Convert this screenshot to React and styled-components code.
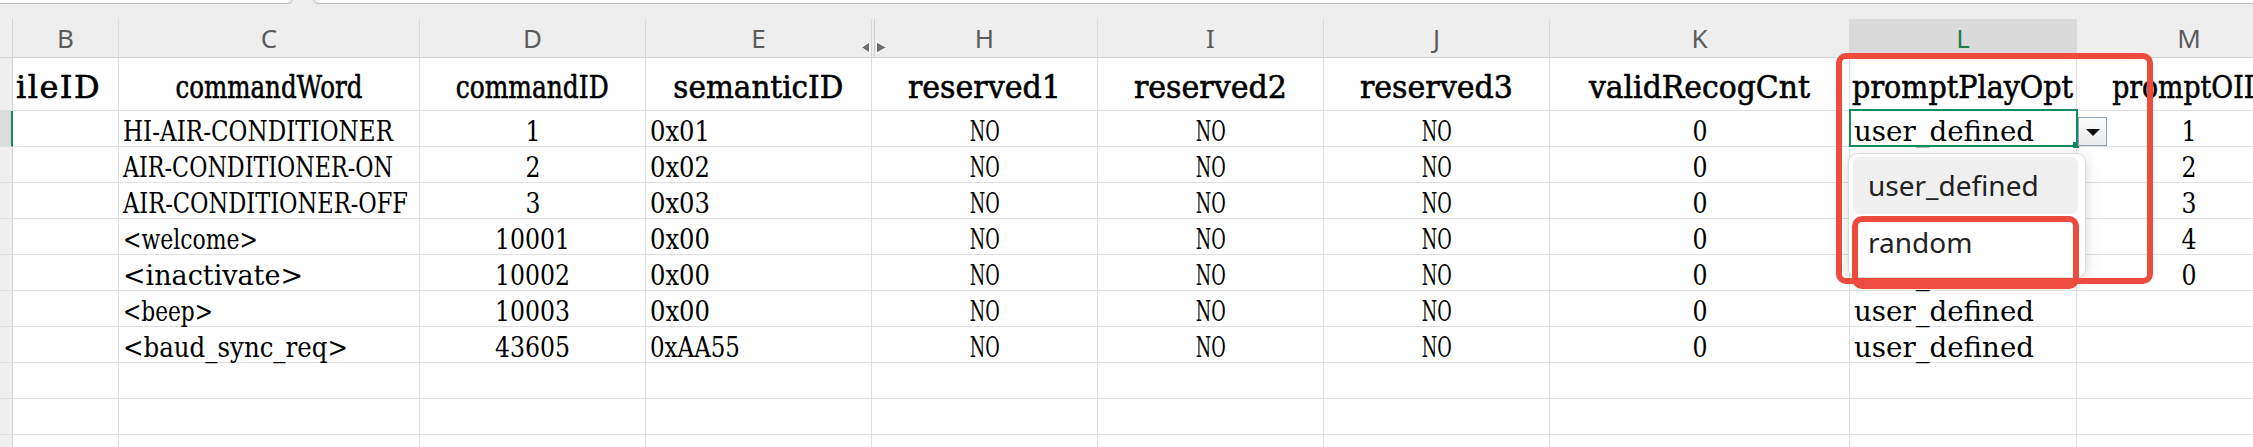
import React, { useLayoutEffect, useRef, useState } from 'react';
import styled, { createGlobalStyle } from 'styled-components';

const GlobalStyle = createGlobalStyle`
  html, body {
    margin: 0;
    padding: 0;
    background: #ffffff;
    overflow: hidden;
  }
`;

const GREEN = '#168a5c';
const RED = '#ee4b3f';
const GRID = '#dfdfdf';

// the sheet font has half-width latin glyphs, so every string takes a fixed pitch per char
const DATA_PITCH = 15;
const TITLE_PITCH = 17;

const columns = [
  { letter: 'B', width: 106, title: 'ileID', align: 'left' },
  { letter: 'C', width: 301, title: 'commandWord', align: 'left' },
  { letter: 'D', width: 226, title: 'commandID', align: 'center' },
  { letter: 'E', width: 226, title: 'semanticID', align: 'left' },
  { letter: 'H', width: 226, title: 'reserved1', align: 'center', hiddenBefore: true },
  { letter: 'I', width: 226, title: 'reserved2', align: 'center' },
  { letter: 'J', width: 226, title: 'reserved3', align: 'center' },
  { letter: 'K', width: 300, title: 'validRecogCnt', align: 'center' },
  { letter: 'L', width: 227, title: 'promptPlayOpt', align: 'left', active: true },
  { letter: 'M', width: 225, title: 'promptOID', align: 'center' },
];

const rows = [
  ['', 'HI-AIR-CONDITIONER', '1', '0x01', 'NO', 'NO', 'NO', '0', 'user_defined', '1'],
  ['', 'AIR-CONDITIONER-ON', '2', '0x02', 'NO', 'NO', 'NO', '0', 'user_defined', '2'],
  ['', 'AIR-CONDITIONER-OFF', '3', '0x03', 'NO', 'NO', 'NO', '0', 'user_defined', '3'],
  ['', '<welcome>', '10001', '0x00', 'NO', 'NO', 'NO', '0', 'user_defined', '4'],
  ['', '<inactivate>', '10002', '0x00', 'NO', 'NO', 'NO', '0', 'user_defined', '0'],
  ['', '<beep>', '10003', '0x00', 'NO', 'NO', 'NO', '0', 'user_defined', ''],
  ['', '<baud_sync_req>', '43605', '0xAA55', 'NO', 'NO', 'NO', '0', 'user_defined', ''],
];

// cells that sit fully under the open dropdown list (row index, column index)
const coveredByList = (i, j) => j === 8 && i >= 1 && i <= 3;

const EMPTY_ROWS = 3;

// squeezes or spreads a serif string so it spans chars * pitch, like the half-width sheet font
const FitText = ({ children, pitch, align }) => {
  const ref = useRef(null);
  const [fit, setFit] = useState(null);

  useLayoutEffect(() => {
    const el = ref.current;
    if (!el) return;
    const natural = el.getBoundingClientRect().width;
    const n = String(children).length;
    const target = n * pitch;
    if (natural < target) {
      setFit({ letterSpacing: `${(target - natural) / n}px` });
    } else {
      setFit({ transform: `scaleX(${target / natural})` });
    }
  }, [children, pitch]);

  return (
    <Glyphs ref={ref} $align={align} style={fit || undefined}>
      {children}
    </Glyphs>
  );
};

const App = () => {
  return (
    <>
      <GlobalStyle />
      <Sheet>
        <TopStrip>
          <EdgeRule $w={288} />
          <Notch width="30" height="19" viewBox="0 0 30 19">
            <path d="M0 3.5 Q3.5 3.5 4.5 0" fill="none" stroke="#bfbfbf" strokeWidth="1" />
            <path d="M25.5 0 Q26.5 3.5 30 3.5" fill="none" stroke="#bfbfbf" strokeWidth="1" />
          </Notch>
          <EdgeRule $grow />
        </TopStrip>

        <Grid $cols={columns.map((c) => c.width)}>
          <RowHead $corner />
          {columns.map((c) => (
            <ColHead key={c.letter} $active={c.active} $hiddenBefore={c.hiddenBefore}>
              {c.letter}
            </ColHead>
          ))}

          <RowHead />
          {columns.map((c, j) => {
            const align = j === 0 ? 'left' : 'center';
            return (
              <TitleCell key={c.letter} $align={align} $pad={3}>
                <FitText pitch={TITLE_PITCH} align={align}>
                  {c.title}
                </FitText>
              </TitleCell>
            );
          })}

          {rows.map((row, i) => (
            <React.Fragment key={i}>
              <RowHead $selected={i === 0} />
              {row.map((value, j) => (
                <DataCell key={j} $align={columns[j].align} $pad={4}>
                  {value && !coveredByList(i, j) && (
                    <FitText pitch={DATA_PITCH} align={columns[j].align}>
                      {value}
                    </FitText>
                  )}
                </DataCell>
              ))}
            </React.Fragment>
          ))}

          {Array.from({ length: EMPTY_ROWS }).map((_, i) => (
            <React.Fragment key={`e${i}`}>
              <RowHead />
              {columns.map((c) => (
                <DataCell key={c.letter} />
              ))}
            </React.Fragment>
          ))}
        </Grid>

        <ResizeCursor width="30" height="16" viewBox="0 0 30 16">
          <path d="M2.5 7.5 L10.5 2 L10.5 13 Z" fill="#6e6e6e" stroke="#ffffff" strokeWidth="1" />
          <path d="M27.5 7.5 L17.5 2 L17.5 13 Z" fill="#6e6e6e" stroke="#ffffff" strokeWidth="1" />
        </ResizeCursor>

        <Selection>
          <FillHandle />
        </Selection>
        <DropButton>
          <Caret />
        </DropButton>

        <DropList>
          <DropItem $hover>user_defined</DropItem>
          <DropItem>random</DropItem>
        </DropList>

        <Callout $left={1836} $top={53} $w={317} $h={231} />
        <Callout $left={1852} $top={216} $w={227} $h={73} />
      </Sheet>
    </>
  );
};

export default App;

// Styled components
const Sheet = styled.div`
  position: relative;
  width: 2253px;
  height: 447px;
  overflow: hidden;
  background: #ffffff;
`;

const TopStrip = styled.div`
  display: flex;
  height: 19px;
  background: #eeeeee;
`;

const EdgeRule = styled.div`
  box-sizing: border-box;
  height: 4px;
  background: #ffffff;
  border-bottom: 1px solid #bfbfbf;
  flex: ${(p) => (p.$grow ? '1 1 auto' : `0 0 ${p.$w}px`)};
`;

const Notch = styled.svg`
  display: block;
  flex: 0 0 30px;
`;

const Grid = styled.div`
  display: grid;
  grid-template-columns: 13px ${(p) => p.$cols.map((w) => `${w}px`).join(' ')};
  grid-template-rows: 39px 53px repeat(${rows.length + EMPTY_ROWS}, 36px);
`;

const RowHead = styled.div`
  box-sizing: border-box;
  background: ${(p) => (p.$selected ? '#dcdcdc' : '#efefef')};
  border-right: ${(p) => (p.$selected ? `2px solid ${GREEN}` : '1px solid #d4d4d4')};
  border-bottom: 1px solid ${(p) => (p.$corner ? '#d4d4d4' : GRID)};
`;

const ColHead = styled.div`
  box-sizing: border-box;
  display: flex;
  justify-content: center;
  align-items: flex-start;
  background: ${(p) => (p.$active ? '#dadada' : '#eeeeee')};
  color: ${(p) => (p.$active ? '#1e7b4a' : '#5b5b5b')};
  border-right: 1px solid #d9d9d9;
  border-bottom: 1px solid #d2d2d2;
  box-shadow: ${(p) => (p.$hiddenBefore ? 'inset 2px 0 0 #eeeeee, inset 3px 0 0 #cfcfcf' : 'none')};
  font-family: 'Noto Sans', 'Liberation Sans', sans-serif;
  font-size: 26px;
  line-height: 38px;
`;

const Cell = styled.div`
  box-sizing: border-box;
  display: flex;
  align-items: flex-start;
  justify-content: ${(p) => (p.$align === 'center' ? 'center' : 'flex-start')};
  padding-left: ${(p) => (p.$align === 'center' ? 0 : p.$pad || 0)}px;
  border-right: 1px solid ${GRID};
  border-bottom: 1px solid ${GRID};
  white-space: nowrap;
  min-width: 0;
  color: #000000;
  font-family: 'DejaVu Serif', 'Liberation Serif', serif;
`;

const TitleCell = styled(Cell)`
  padding-top: 3px;
  font-size: 32px;
  line-height: 52px;
  font-weight: normal;
  -webkit-text-stroke: 0.6px #000000;
`;

const DataCell = styled(Cell)`
  padding-top: 3px;
  font-size: 28px;
  line-height: 35px;
`;

const Glyphs = styled.span`
  display: inline-block;
  flex: none;
  transform-origin: ${(p) => (p.$align === 'center' ? 'center' : 'left')} center;
`;

const ResizeCursor = styled.svg`
  position: absolute;
  left: 859px;
  top: 40px;
`;

const Selection = styled.div`
  position: absolute;
  left: 1849px;
  top: 109px;
  width: 229px;
  height: 38px;
  box-sizing: border-box;
  border: 2px solid ${GREEN};
`;

const FillHandle = styled.div`
  position: absolute;
  right: -3px;
  bottom: -3px;
  width: 6px;
  height: 6px;
  background: ${GREEN};
`;

const DropButton = styled.div`
  position: absolute;
  left: 2078px;
  top: 117px;
  width: 29px;
  height: 29px;
  box-sizing: border-box;
  border: 1px solid #8ca2bb;
  background: linear-gradient(#fbfbfb, #ececec);
  display: flex;
  justify-content: center;
  padding-top: 11px;
`;

const Caret = styled.div`
  width: 0;
  height: 0;
  border-left: 7px solid transparent;
  border-right: 7px solid transparent;
  border-top: 7px solid #111111;
`;

const DropList = styled.div`
  position: absolute;
  left: 1848px;
  top: 153px;
  width: 238px;
  height: 125px;
  box-sizing: border-box;
  padding: 3px 7px 6px 4px;
  display: flex;
  flex-direction: column;
  background: #ffffff;
  border: 1px solid #dcdcdc;
  border-radius: 9px;
  box-shadow: 0 3px 14px rgba(0, 0, 0, 0.16);
`;

const DropItem = styled.div`
  height: 57px;
  padding-left: 15px;
  border-radius: 7px;
  background: ${(p) => (p.$hover ? '#f0f0f0' : 'transparent')};
  font-family: 'Noto Sans', 'Open Sans', sans-serif;
  font-size: 28px;
  line-height: 57px;
  color: #222222;
`;

const Callout = styled.div`
  position: absolute;
  left: ${(p) => p.$left}px;
  top: ${(p) => p.$top}px;
  width: ${(p) => p.$w}px;
  height: ${(p) => p.$h}px;
  box-sizing: border-box;
  border: 6px solid ${RED};
  border-radius: 10px;
  pointer-events: none;
`;
